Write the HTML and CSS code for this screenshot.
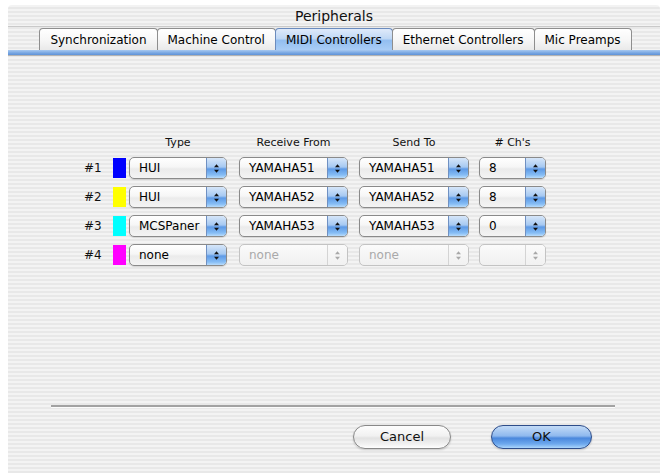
FILE: index.html
```html
<!DOCTYPE html>
<html>
<head>
<meta charset="utf-8">
<link rel="stylesheet" href="styles.css">
</head>
<body>
<div class="window">
  <div class="titlebar">Peripherals</div>
  <div class="tabs">
    <div class="tab">Synchronization</div>
    <div class="tab">Machine Control</div>
    <div class="tab selected">MIDI Controllers</div>
    <div class="tab">Ethernet Controllers</div>
    <div class="tab">Mic Preamps</div>
  </div>
  <div class="tabbar"></div>
  <div class="content">
    <div class="table">
      <div class="row head">
        <span class="num"></span><span class="sw"></span>
        <span class="col c-type">Type</span>
        <span class="col c-recv">Receive From</span>
        <span class="col c-send">Send To</span>
        <span class="col c-ch"># Ch's</span>
      </div>

      <div class="row">
        <span class="num">#1</span><span class="sw blue"></span>
        <div class="pop c-type"><span class="val">HUI</span><span class="arrow"><svg width="7" height="11" viewBox="0 0 7 11"><path d="M1 4.2 L3.5 1.2 L6 4.2Z M1 6.8 L3.5 9.8 L6 6.8Z"/></svg></span></div>
        <div class="pop c-recv"><span class="val">YAMAHA51</span><span class="arrow"><svg width="7" height="11" viewBox="0 0 7 11"><path d="M1 4.2 L3.5 1.2 L6 4.2Z M1 6.8 L3.5 9.8 L6 6.8Z"/></svg></span></div>
        <div class="pop c-send"><span class="val">YAMAHA51</span><span class="arrow"><svg width="7" height="11" viewBox="0 0 7 11"><path d="M1 4.2 L3.5 1.2 L6 4.2Z M1 6.8 L3.5 9.8 L6 6.8Z"/></svg></span></div>
        <div class="pop c-ch"><span class="val">8</span><span class="arrow"><svg width="7" height="11" viewBox="0 0 7 11"><path d="M1 4.2 L3.5 1.2 L6 4.2Z M1 6.8 L3.5 9.8 L6 6.8Z"/></svg></span></div>
      </div>

      <div class="row">
        <span class="num">#2</span><span class="sw yellow"></span>
        <div class="pop c-type"><span class="val">HUI</span><span class="arrow"><svg width="7" height="11" viewBox="0 0 7 11"><path d="M1 4.2 L3.5 1.2 L6 4.2Z M1 6.8 L3.5 9.8 L6 6.8Z"/></svg></span></div>
        <div class="pop c-recv"><span class="val">YAMAHA52</span><span class="arrow"><svg width="7" height="11" viewBox="0 0 7 11"><path d="M1 4.2 L3.5 1.2 L6 4.2Z M1 6.8 L3.5 9.8 L6 6.8Z"/></svg></span></div>
        <div class="pop c-send"><span class="val">YAMAHA52</span><span class="arrow"><svg width="7" height="11" viewBox="0 0 7 11"><path d="M1 4.2 L3.5 1.2 L6 4.2Z M1 6.8 L3.5 9.8 L6 6.8Z"/></svg></span></div>
        <div class="pop c-ch"><span class="val">8</span><span class="arrow"><svg width="7" height="11" viewBox="0 0 7 11"><path d="M1 4.2 L3.5 1.2 L6 4.2Z M1 6.8 L3.5 9.8 L6 6.8Z"/></svg></span></div>
      </div>

      <div class="row">
        <span class="num">#3</span><span class="sw cyan"></span>
        <div class="pop c-type"><span class="val">MCSPaner</span><span class="arrow"><svg width="7" height="11" viewBox="0 0 7 11"><path d="M1 4.2 L3.5 1.2 L6 4.2Z M1 6.8 L3.5 9.8 L6 6.8Z"/></svg></span></div>
        <div class="pop c-recv"><span class="val">YAMAHA53</span><span class="arrow"><svg width="7" height="11" viewBox="0 0 7 11"><path d="M1 4.2 L3.5 1.2 L6 4.2Z M1 6.8 L3.5 9.8 L6 6.8Z"/></svg></span></div>
        <div class="pop c-send"><span class="val">YAMAHA53</span><span class="arrow"><svg width="7" height="11" viewBox="0 0 7 11"><path d="M1 4.2 L3.5 1.2 L6 4.2Z M1 6.8 L3.5 9.8 L6 6.8Z"/></svg></span></div>
        <div class="pop c-ch"><span class="val">0</span><span class="arrow"><svg width="7" height="11" viewBox="0 0 7 11"><path d="M1 4.2 L3.5 1.2 L6 4.2Z M1 6.8 L3.5 9.8 L6 6.8Z"/></svg></span></div>
      </div>

      <div class="row">
        <span class="num">#4</span><span class="sw magenta"></span>
        <div class="pop c-type"><span class="val">none</span><span class="arrow"><svg width="7" height="11" viewBox="0 0 7 11"><path d="M1 4.2 L3.5 1.2 L6 4.2Z M1 6.8 L3.5 9.8 L6 6.8Z"/></svg></span></div>
        <div class="pop c-recv disabled"><span class="val">none</span><span class="arrow"><svg width="7" height="11" viewBox="0 0 7 11"><path d="M1 4.2 L3.5 1.2 L6 4.2Z M1 6.8 L3.5 9.8 L6 6.8Z"/></svg></span></div>
        <div class="pop c-send disabled"><span class="val">none</span><span class="arrow"><svg width="7" height="11" viewBox="0 0 7 11"><path d="M1 4.2 L3.5 1.2 L6 4.2Z M1 6.8 L3.5 9.8 L6 6.8Z"/></svg></span></div>
        <div class="pop c-ch disabled"><span class="val"></span><span class="arrow"><svg width="7" height="11" viewBox="0 0 7 11"><path d="M1 4.2 L3.5 1.2 L6 4.2Z M1 6.8 L3.5 9.8 L6 6.8Z"/></svg></span></div>
      </div>
    </div>

    <div class="sep"></div>

    <div class="buttons">
      <div class="btn cancel">Cancel</div>
      <div class="btn ok">OK</div>
    </div>
  </div>
</div>
</body>
</html>
```

FILE: styles.css
```css
html, body {
  margin: 0;
  padding: 0;
  background: #ffffff;
}

body {
  width: 668px;
  height: 473px;
  overflow: hidden;
  font-family: "DejaVu Sans", "Noto Sans", sans-serif;
  color: #000;
}

.window {
  margin: 5px 8px 0 8px;
  height: 468px;
  border-radius: 4px 4px 0 0;
  background: repeating-linear-gradient(to bottom, #f3f3f3 0px, #f3f3f3 2px, #e8e8e8 2px, #e8e8e8 4px);
  display: flex;
  flex-direction: column;
}

.titlebar {
  height: 21px;
  line-height: 22px;
  text-align: center;
  font-size: 14px;
  color: #111;
  border-bottom: 1px solid #c9c9c9;
}

.tabs {
  display: flex;
  justify-content: center;
  padding-top: 1px;
  padding-left: 4px;
  height: 22px;
}

.tab {
  box-sizing: border-box;
  height: 22px;
  padding: 0 10px;
  margin-left: -1px;
  font-size: 12px;
  line-height: 22px;
  color: #000;
  border: 1px solid #8e8e8e;
  border-bottom: none;
  border-radius: 4px 4px 0 0;
  background: linear-gradient(to bottom, #ffffff 0%, #f7f7f7 50%, #e9e9e9 100%);
}

.tab.selected {
  border-color: #6b8bbd;
  background: linear-gradient(to bottom, #dfeafa 0%, #c0d8f5 45%, #93bef0 55%, #a9cdf6 100%);
}

.tabbar {
  height: 5px;
  background: linear-gradient(to bottom, #a8c9f1 0%, #77a6e2 60%, #5f93d8 100%);
  border-bottom: 1px solid #b3b3b3;
}

.content {
  display: flex;
  flex-direction: column;
}

.table {
  padding-top: 80px;
  padding-left: 76px;
  display: flex;
  flex-direction: column;
}

.row {
  display: flex;
  align-items: center;
  height: 22px;
  margin-top: 7px;
}

.row.head {
  height: 14px;
  margin-top: 0;
}

.num {
  width: 17px;
  text-align: right;
  font-size: 12px;
  color: #111;
}

.sw {
  width: 13px;
  height: 20px;
  margin-left: 12px;
}

.sw.blue { background: #0000ff; }
.sw.yellow { background: #ffff00; }
.sw.cyan { background: #00ffff; }
.sw.magenta { background: #ff00ff; }

.col {
  text-align: center;
  font-size: 11px;
  line-height: 14px;
  color: #111;
}

.c-type { width: 98px; margin-left: 3px; }
.c-recv { width: 109px; margin-left: 12px; }
.c-send { width: 110px; margin-left: 11px; }
.c-ch { width: 67px; margin-left: 10px; }

.pop {
  box-sizing: border-box;
  height: 22px;
  display: flex;
  border: 1px solid #8a8a8a;
  border-radius: 5px;
  overflow: hidden;
  background: linear-gradient(to bottom, #ffffff 0%, #f6f6f6 45%, #ebebeb 55%, #f4f4f4 100%);
  box-shadow: 0 1px 1px rgba(0, 0, 0, 0.12);
}

.pop .val {
  flex: 1;
  padding-left: 9px;
  font-size: 12px;
  line-height: 20px;
  color: #000;
  white-space: nowrap;
}

.pop .arrow {
  width: 19px;
  display: flex;
  align-items: center;
  justify-content: center;
  border-left: 1px solid #6f90c2;
  background: linear-gradient(to bottom, #d6e6f9 0%, #a6c9f2 45%, #5e9ae6 55%, #86bdf5 85%, #b9dcfb 100%);
}

.pop .arrow svg path {
  fill: #111;
}

.pop.disabled {
  border-color: #c3c3c3;
  background: linear-gradient(to bottom, #fbfbfb 0%, #f5f5f5 50%, #f0f0f0 100%);
  box-shadow: none;
}

.pop.disabled .val {
  color: #a9a9a9;
}

.pop.disabled .arrow {
  border-left: 1px solid #d4d4d4;
  background: linear-gradient(to bottom, #fafafa 0%, #f1f1f1 100%);
}

.pop.disabled .arrow svg path {
  fill: #a8a8a8;
}

.sep {
  margin-top: 139px;
  margin-left: 43px;
  width: 564px;
  height: 2px;
  background: #a2a2a2;
  box-shadow: 0 1px 0 #fbfbfb;
}

.buttons {
  display: flex;
  margin-top: 18px;
  padding-left: 345px;
  gap: 40px;
}

.btn {
  box-sizing: border-box;
  height: 24px;
  border-radius: 12px;
  text-align: center;
  font-size: 13px;
  line-height: 22px;
  color: #111;
  box-shadow: 0 1px 2px rgba(0, 0, 0, 0.18);
}

.btn.cancel {
  width: 98px;
  border: 1px solid #888888;
  background: linear-gradient(to bottom, #fdfdfd 0%, #f1f1f1 45%, #e2e2e2 55%, #f3f3f3 85%, #ffffff 100%);
}

.btn.ok {
  width: 101px;
  border: 1px solid #2e4d8a;
  background: linear-gradient(to bottom, #c3dbf7 0%, #8fb9ee 45%, #4a87dc 55%, #6ea9ee 82%, #acd6fc 100%);
}
```
